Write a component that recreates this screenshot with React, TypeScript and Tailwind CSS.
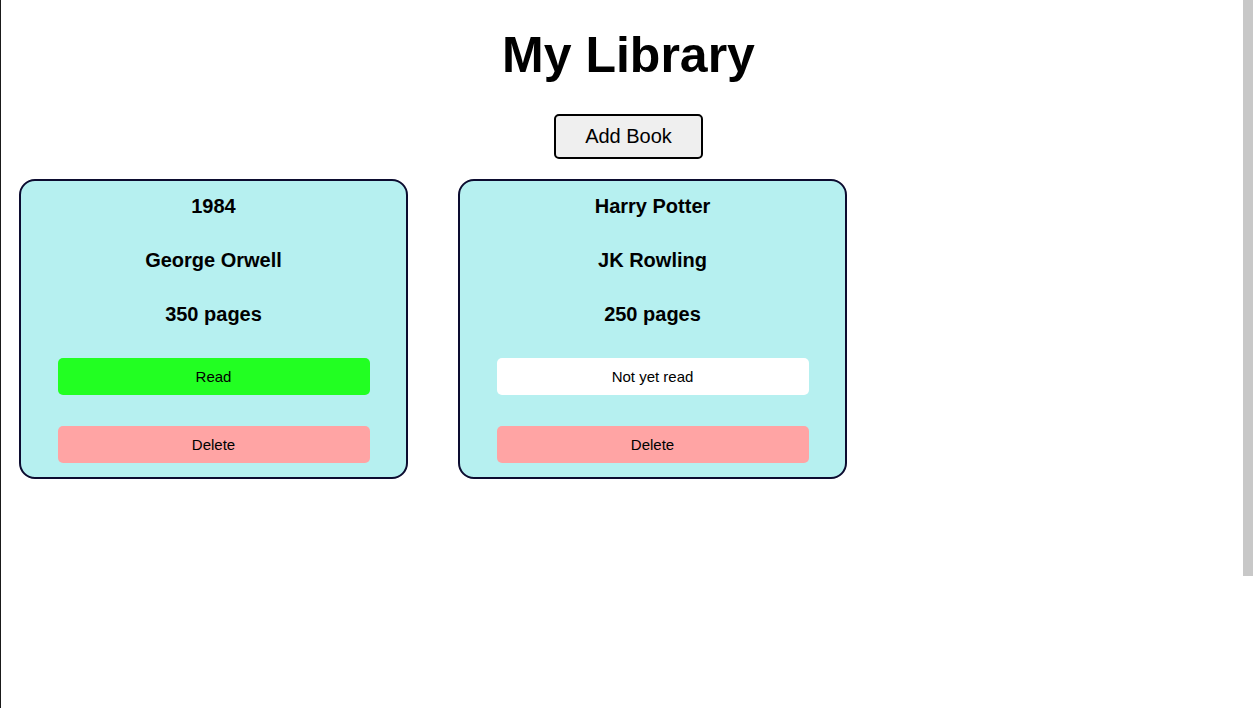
const books = [
  { title: '1984', author: 'George Orwell', pages: 350, read: true },
  { title: 'Harry Potter', author: 'JK Rowling', pages: 250, read: false },
];

const BookCard = ({ book }: { book: (typeof books)[number] }) => {
  return (
    <div className="w-[389px] h-[300px] rounded-2xl border-2 border-[#0c0c30] bg-[#b6f0f0] flex flex-col items-center pt-[13px]">
      <p className="text-[20px] leading-[24px] font-bold">{book.title}</p>
      <p className="mt-[30px] text-[20px] leading-[24px] font-bold">{book.author}</p>
      <p className="mt-[30px] text-[20px] leading-[24px] font-bold">{book.pages} pages</p>
      <button
        className={
          book.read
            ? 'mt-[32px] w-[312px] h-[37px] pt-[2px] rounded-[5px] bg-[#22ff22] text-[15px]'
            : 'mt-[32px] w-[312px] h-[37px] pt-[2px] rounded-[5px] bg-white text-[15px]'
        }
      >
        {book.read ? 'Read' : 'Not yet read'}
      </button>
      <button className="mt-[31px] w-[312px] h-[37px] pt-[2px] rounded-[5px] bg-[#ffa4a4] text-[15px]">Delete</button>
    </div>
  );
};

export default function App() {
  return (
    <div className="relative h-[708px] w-[1256px] overflow-hidden bg-white text-black font-['Liberation_Sans',Arial,sans-serif]">
      <div className="h-full border-l border-[#1a1a1a] flex flex-col">
        <h1 className="mt-[27px] text-center text-[50px] leading-[57px] font-bold">My Library</h1>
        <div className="mt-[30px] flex justify-center">
          <button className="w-[149px] h-[45px] pb-[2px] rounded-[5px] border-2 border-black bg-[#efefef] text-[20px]">
            Add Book
          </button>
        </div>
        <div className="mt-[20px] pl-[18px] flex gap-[50px]">
          {books.map((b) => (
            <BookCard key={b.title} book={b} />
          ))}
        </div>
      </div>
      <div className="absolute top-0 left-[1243px] w-[10px] h-[576px] bg-[#c8c8c8]" />
    </div>
  );
}
